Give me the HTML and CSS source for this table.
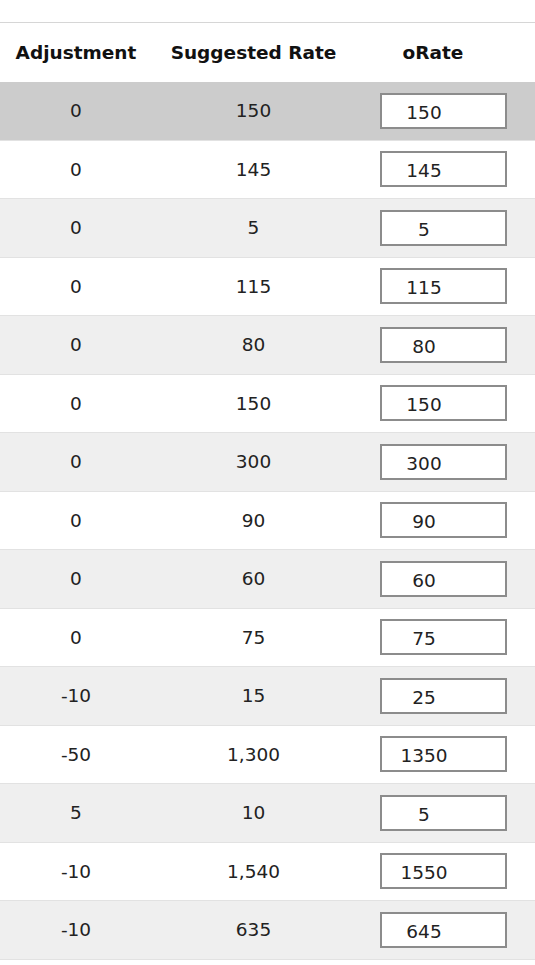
FILE: index.html
```html
<!DOCTYPE html>
<html>
<head>
<meta charset="utf-8">
<link rel="stylesheet" href="styles.css">
</head>
<body>
<div class="grid">
  <div class="row head">
    <div class="cell">Adjustment</div>
    <div class="cell">Suggested Rate</div>
    <div class="cell">oRate</div>
    <div class="cell"></div>
  </div>
  <div class="row sel"><div class="cell">0</div><div class="cell">150</div><div class="cell inp"><span class="box">150</span></div><div class="cell"></div></div>
  <div class="row"><div class="cell">0</div><div class="cell">145</div><div class="cell inp"><span class="box">145</span></div><div class="cell"></div></div>
  <div class="row alt"><div class="cell">0</div><div class="cell">5</div><div class="cell inp"><span class="box">5</span></div><div class="cell"></div></div>
  <div class="row"><div class="cell">0</div><div class="cell">115</div><div class="cell inp"><span class="box">115</span></div><div class="cell"></div></div>
  <div class="row alt"><div class="cell">0</div><div class="cell">80</div><div class="cell inp"><span class="box">80</span></div><div class="cell"></div></div>
  <div class="row"><div class="cell">0</div><div class="cell">150</div><div class="cell inp"><span class="box">150</span></div><div class="cell"></div></div>
  <div class="row alt"><div class="cell">0</div><div class="cell">300</div><div class="cell inp"><span class="box">300</span></div><div class="cell"></div></div>
  <div class="row"><div class="cell">0</div><div class="cell">90</div><div class="cell inp"><span class="box">90</span></div><div class="cell"></div></div>
  <div class="row alt"><div class="cell">0</div><div class="cell">60</div><div class="cell inp"><span class="box">60</span></div><div class="cell"></div></div>
  <div class="row"><div class="cell">0</div><div class="cell">75</div><div class="cell inp"><span class="box">75</span></div><div class="cell"></div></div>
  <div class="row alt"><div class="cell">-10</div><div class="cell">15</div><div class="cell inp"><span class="box">25</span></div><div class="cell"></div></div>
  <div class="row"><div class="cell">-50</div><div class="cell">1,300</div><div class="cell inp"><span class="box">1350</span></div><div class="cell"></div></div>
  <div class="row alt"><div class="cell">5</div><div class="cell">10</div><div class="cell inp"><span class="box">5</span></div><div class="cell"></div></div>
  <div class="row"><div class="cell">-10</div><div class="cell">1,540</div><div class="cell inp"><span class="box">1550</span></div><div class="cell"></div></div>
  <div class="row alt"><div class="cell">-10</div><div class="cell">635</div><div class="cell inp"><span class="box">645</span></div><div class="cell"></div></div>
</div>
</body>
</html>
```
FILE: styles.css
```css
html, body {
  margin: 0;
  padding: 0;
  background: #fff;
}
body {
  font-family: "DejaVu Sans", Verdana, sans-serif;
  font-size: 18.5px;
  color: #222;
  padding-top: 22px;
}
.grid {
  border-top: 1px solid #d6d6d6;
}
.row {
  display: grid;
  grid-template-columns: 152px 203px 156px 1fr;
  height: 58.53px;
  box-sizing: border-box;
  border-bottom: 1px solid #e2e2e2;
  background: #fff;
}
.row.head {
  height: 59px;
  border-bottom: none;
  font-weight: bold;
  color: #111;
}
.row.sel {
  background: #cccccc;
}
.row.alt {
  background: #efefef;
}
.cell {
  display: flex;
  align-items: center;
  justify-content: center;
}
.cell.inp {
  justify-content: flex-start;
  padding-left: 25px;
}
.box {
  display: block;
  box-sizing: border-box;
  width: 127px;
  height: 36px;
  line-height: 32px;
  padding: 2px 39px 0 0;
  text-align: center;
  background: #fff;
  border: 2px solid #8c8c8c;
}
```
